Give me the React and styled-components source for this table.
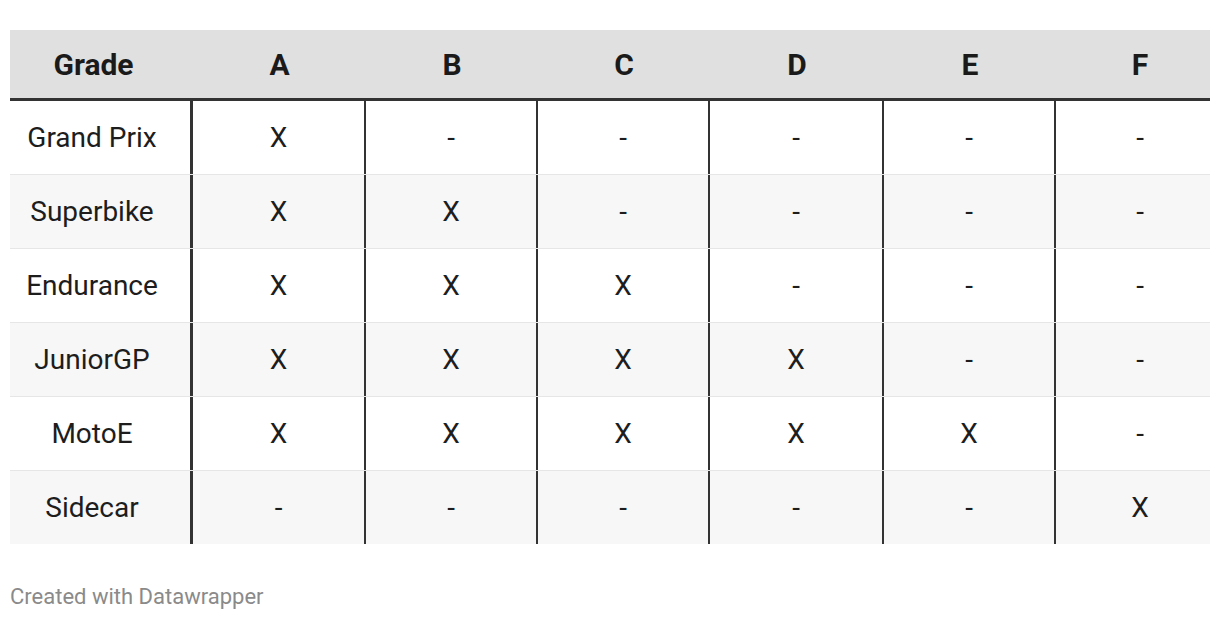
import React from 'react'
import styled, { createGlobalStyle } from 'styled-components'

const GlobalStyle = createGlobalStyle`
  html, body {
    margin: 0;
    padding: 0;
    background: #ffffff;
  }
  body {
    font-family: Roboto, 'Liberation Sans', sans-serif;
    color: #1d1d1d;
  }
`

const columns = '183px 173px 172px 172px 174px 172px 154px'

const grades = ['A', 'B', 'C', 'D', 'E', 'F']

const rows = [
  { name: 'Grand Prix', marks: 1 },
  { name: 'Superbike', marks: 2 },
  { name: 'Endurance', marks: 3 },
  { name: 'JuniorGP', marks: 4 },
  { name: 'MotoE', marks: 5 },
  { name: 'Sidecar', only: 5 },
]

const Page = styled.div`
  padding: 30px 10px 0;
  width: 1200px;
`

const Table = styled.div`
  display: flex;
  flex-direction: column;
`

const HeadRow = styled.div`
  display: grid;
  grid-template-columns: ${columns};
  height: 68px;
  background: #e0e0e0;
  border-bottom: 3px solid #333333;
`

const HeadCell = styled.div`
  display: flex;
  align-items: center;
  justify-content: center;
  font-size: 30px;
  font-weight: 700;
  color: #1a1a1a;
  padding-left: ${({ shift }) => (shift > 0 ? shift * 2 : 0)}px;
  padding-right: ${({ shift }) => (shift < 0 ? -shift * 2 : 0)}px;
`

const Row = styled.div`
  display: grid;
  grid-template-columns: ${columns};
  height: 73px;
  background: ${({ striped }) => (striped ? '#f7f7f7' : '#ffffff')};
  border-bottom: ${({ last }) => (last ? 'none' : '1px solid #e6e6e6')};
`

const Cell = styled.div`
  display: flex;
  align-items: center;
  justify-content: center;
  font-size: 28px;
  color: #1d1d1d;
  border-right: ${({ edge }) => (edge ? `${edge}px solid #333333` : 'none')};
  padding-left: ${({ shift }) => (shift > 0 ? shift * 2 : 0)}px;
  padding-right: ${({ shift }) => (shift < 0 ? -shift * 2 : 0)}px;
`

const Footer = styled.div`
  margin-top: 40px;
  font-size: 22px;
  color: #8a8a8a;
`

const edgeFor = (i) => (i === 0 ? 3 : i === 6 ? 0 : 2)
const shiftFor = (i) => (i === 0 ? -8 : i === 6 ? 7 : 0)

const mark = (row, idx) => {
  if (row.only !== undefined) return row.only === idx ? 'X' : '-'
  return idx < row.marks ? 'X' : '-'
}

export default function App() {
  return (
    <Page>
      <GlobalStyle />
      <Table>
        <HeadRow>
          <HeadCell shift={shiftFor(0)}>Grade</HeadCell>
          {grades.map((g, i) => (
            <HeadCell key={g} shift={shiftFor(i + 1)}>
              {g}
            </HeadCell>
          ))}
        </HeadRow>
        {rows.map((row, r) => (
          <Row key={row.name} striped={r % 2 === 1} last={r === rows.length - 1}>
            <Cell edge={edgeFor(0)} shift={shiftFor(0)}>
              {row.name}
            </Cell>
            {grades.map((g, i) => (
              <Cell key={g} edge={edgeFor(i + 1)} shift={shiftFor(i + 1)}>
                {mark(row, i)}
              </Cell>
            ))}
          </Row>
        ))}
      </Table>
      <Footer>Created with Datawrapper</Footer>
    </Page>
  )
}
